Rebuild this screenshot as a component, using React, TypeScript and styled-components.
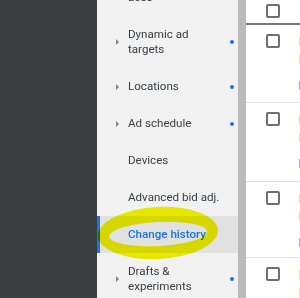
import styled, { createGlobalStyle } from "styled-components";

const GlobalStyle = createGlobalStyle`
  html, body {
    margin: 0;
    padding: 0;
    overflow: hidden;
    font-family: Roboto, "Liberation Sans", sans-serif;
  }
`;

type NavEntry = { lines: string[]; arrow?: boolean; dot?: boolean; active?: boolean };

const navItems: NavEntry[] = [
  { lines: ["Less"] },
  { lines: ["Dynamic ad", "targets"], arrow: true, dot: true },
  { lines: ["Locations"], arrow: true, dot: true },
  { lines: ["Ad schedule"], arrow: true, dot: true },
  { lines: ["Devices"] },
  { lines: ["Advanced bid adj."] },
  { lines: ["Change history"], active: true },
  { lines: ["Drafts &", "experiments"], arrow: true, dot: true },
];

const rows = [
  { height: 78, marks: ["#f8d98c", "#f8d98c", "#b9a3e3"] },
  { height: 79, marks: ["#f8d98c", "#f8d98c", "#b9a3e3"] },
  { height: 76, marks: ["#f8d98c", "#f8d98c", "#b9a3e3"] },
  { height: 60, marks: ["#f8d98c", "#f8d98c"] },
];

// ring drawn as outer minus inner ellipse so top/bottom read thicker than the sides
const ring =
  "M1 233 A60 26 0 1 0 121 233 A60 26 0 1 0 1 233 Z " +
  "M12 234 A49 12 0 1 0 110 234 A49 12 0 1 0 12 234 Z";

export default function App() {
  return (
    <Page>
      <GlobalStyle />
      <DarkPane />
      <SideNav>
        <NavList>
          {navItems.map(item => (
            <NavItem key={item.lines.join(" ")} $active={item.active}>
              <ArrowCell>{item.arrow && <Arrow />}</ArrowCell>
              <Label $active={item.active}>
                {item.lines.map(line => (
                  <LabelLine key={line}>{line}</LabelLine>
                ))}
              </Label>
              <DotCell>{item.dot && <Dot />}</DotCell>
            </NavItem>
          ))}
        </NavList>
        <Highlighter viewBox="0 0 141 298" width={141} height={298}>
          <path d={ring} fill="#f4f400" fillRule="evenodd" transform="rotate(-3 61 233)" />
        </Highlighter>
      </SideNav>
      <ScrollTrack />
      <Table>
        <HeaderRow>
          <Checkbox />
        </HeaderRow>
        {rows.map((row, i) => (
          <Row key={i} style={{ height: row.height }}>
            <Checkbox />
            <StatusCol>
              {row.marks.map((c, j) => (
                <StatusText key={j} $color={c}>
                  Eligible
                </StatusText>
              ))}
            </StatusCol>
          </Row>
        ))}
      </Table>
    </Page>
  );
}

const Page = styled.div`
  display: flex;
  width: 300px;
  height: 298px;
  overflow: hidden;
`;

const DarkPane = styled.div`
  width: 97px;
  flex-shrink: 0;
  background: #3c3f42;
`;

const SideNav = styled.div`
  position: relative;
  width: 141px;
  flex-shrink: 0;
  background: #f1f1f1;
  overflow: hidden;
`;

const NavList = styled.ul`
  list-style: none;
  margin: -21px 0 0;
  padding: 0;
`;

const NavItem = styled.li<{ $active?: boolean }>`
  display: grid;
  grid-template-columns: 31px 1fr 12px;
  align-items: center;
  padding: 11px 0;
  background: ${p => (p.$active ? "#e1e1e1" : "transparent")};
  box-shadow: ${p => (p.$active ? "inset 3px 0 0 #1a73e8" : "none")};
`;

const ArrowCell = styled.span`
  display: flex;
  justify-content: flex-end;
  padding-right: 9px;
`;

const Arrow = styled.span`
  width: 0;
  height: 0;
  border-top: 3px solid transparent;
  border-bottom: 3px solid transparent;
  border-left: 3px solid #80868b;
`;

const Label = styled.span<{ $active?: boolean }>`
  display: flex;
  flex-direction: column;
  font-size: 11.6px;
  line-height: 15px;
  color: ${p => (p.$active ? "#1a73e8" : "#3c4043")};
  font-weight: ${p => (p.$active ? 500 : 400)};
`;

const LabelLine = styled.span`
  white-space: nowrap;
`;

const DotCell = styled.span`
  display: flex;
  justify-content: center;
`;

const Dot = styled.span`
  width: 4px;
  height: 4px;
  border-radius: 50%;
  background: #1a73e8;
`;

const Highlighter = styled.svg`
  position: absolute;
  left: 0;
  top: 0;
  mix-blend-mode: multiply;
  pointer-events: none;
`;

const ScrollTrack = styled.div`
  width: 8px;
  flex-shrink: 0;
  background: #bababa;
`;

const Table = styled.div`
  flex: 1;
  background: #fff;
  overflow: hidden;
`;

const HeaderRow = styled.div`
  display: flex;
  height: 25px;
  padding: 4px 0 0 20px;
  box-sizing: border-box;
  border-bottom: 2px solid #777;
`;

const Row = styled.div`
  display: flex;
  gap: 18px;
  padding: 9px 0 0 20px;
  box-sizing: border-box;
  border-bottom: 1px solid #e0e0e0;
`;

const Checkbox = styled.span`
  width: 14px;
  height: 14px;
  box-sizing: border-box;
  border: 2px solid #6f6f6f;
  border-radius: 2px;
  flex-shrink: 0;
`;

const StatusCol = styled.div`
  display: flex;
  flex-direction: column;
  gap: 5px;
  padding-top: 2px;
`;

const StatusText = styled.span<{ $color: string }>`
  font-size: 12px;
  line-height: 13px;
  white-space: nowrap;
  color: ${p => p.$color};
  &:last-child:nth-child(3) {
    margin-top: 8px;
  }
`;
